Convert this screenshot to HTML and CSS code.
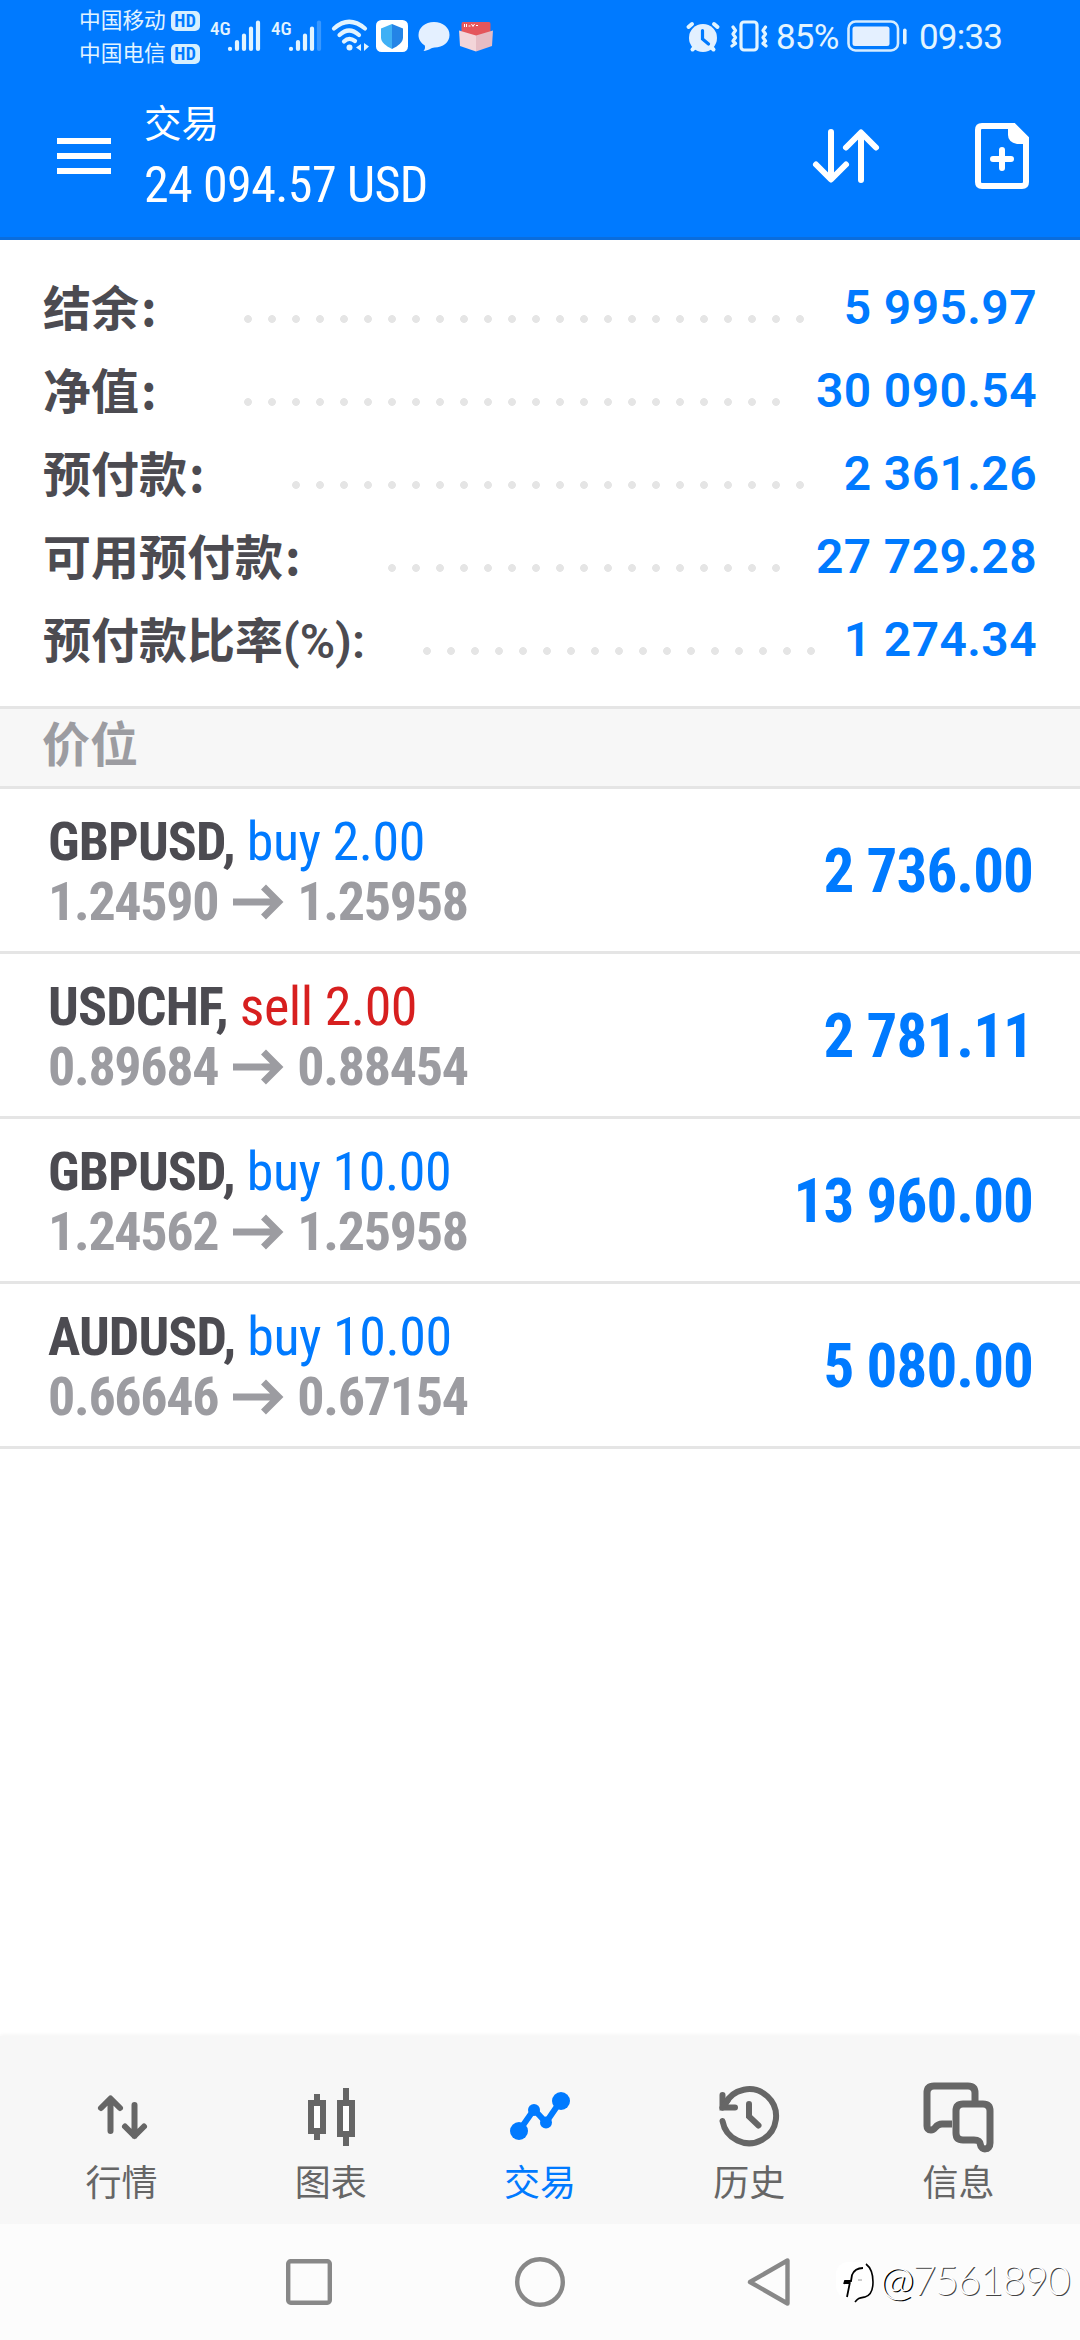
FILE: index.html
```
<!DOCTYPE html>
<html lang="zh-CN">
<head>
<meta charset="utf-8">
<title>交易</title>
<link rel="stylesheet" href="styles.css">
</head>
<body>
<div class="screen">
  <header class="top">
    <div class="status">
      <div class="carriers">
        <div class="carrier"><span>中国移动</span><b class="hd">HD</b></div>
        <div class="carrier"><span>中国电信</span><b class="hd">HD</b></div>
      </div>
      <div class="signal">
        <span class="net">4G</span>
        <svg width="34" height="32" viewBox="0 0 34 32" stroke="#e2f4ff" stroke-width="4.2" stroke-linecap="round"><path d="M3 28.8v.2M10 22v7M17 15.500v13.500M24 8.500v20.500M31 2.500v26.500"/></svg>
      </div>
      <div class="signal signal-2">
        <span class="net">4G</span>
        <svg width="34" height="32" viewBox="0 0 34 32" stroke="#e2f4ff" stroke-width="4.2" stroke-linecap="round"><path d="M3 28.8v.2M10 22v7M17 15.500v13.500M24 8.500v20.500"/><path d="M31 2.500v26.500" opacity=".25"/></svg>
      </div>
      <svg class="wifi" width="40" height="34" viewBox="0 0 40 34" fill="none" stroke="#e2f4ff" stroke-width="4.200" stroke-linecap="round"><path d="M3 9.500Q18 -4 34 9.500M8.500 16Q18 7 28 16M13 22.500Q18 17.500 24 22"/><circle cx="18.500" cy="28.500" r="3" fill="#e2f4ff" stroke="none"/><path d="M30 25v7l-5-3.500zM33 24v8l5-4.500z" fill="#e2f4ff" stroke="none"/></svg>
      <svg class="shield" width="32" height="32" viewBox="0 0 32 32"><rect width="32" height="32" rx="5.500" fill="#fff"/><path d="M16 4l11 4.500v9c0 5-5 8.500-11 11.500z" fill="#2484e6"/><path d="M16 4L5 8.500v9c0 5 5 8.500 11 11.500z" fill="#3fb0f5"/></svg>
      <svg class="chat" width="32" height="31" viewBox="0 0 32 31"><path d="M16 1c9 0 15.500 5.600 15.500 13S25 26.500 16.500 26.500c-3.500 0-5.500 3.200-11 3.500 1.500-1.500 1.800-3.500 1.300-5.500C3 22.200.500 18.500.500 14 .500 6.600 7 1 16 1z" fill="#e4f0ff"/></svg>
      <svg class="gift" width="34" height="31" viewBox="0 0 34 31"><path d="M4 1h26q1.500 0 1.500 2v12H2.500V3Q2.500 1 4 1z" fill="#e4565c"/><path d="M0 9.500L17 14.500V30.500L1 25z" fill="#f3d5d9"/><path d="M34 9.500L17 14.500V30.500L33 25z" fill="#e6bcc4"/><path d="M5.500 3v3M7.500 3v3M9.500 5h2M12.500 3l1.500 2.500L15.500 3M17 4.500h2" stroke="#fff" fill="none"/></svg>
      <svg class="alarm" width="34" height="31" viewBox="0 0 34 31" fill="none" stroke="#e2f4ff" stroke-width="4" stroke-linecap="round"><circle cx="17" cy="17" r="14" fill="#e2f0ff" stroke="none"/><path d="M2.500 6L6 3M31.500 6L28 3M6.500 28.500L9 26M27.500 28.500L25 26"/><path d="M16.500 9.500v8.500l6 5" stroke="#007aff" stroke-width="3.200"/></svg>
      <svg class="vibrate" width="38" height="32" viewBox="0 0 38 32" fill="none" stroke="#e2f4ff" stroke-width="3.200" stroke-linecap="round" stroke-linejoin="round"><rect x="11" y="2" width="16" height="28" rx="3"/><path d="M3 7l2.500 3.500L3 14l2.500 3.500L3 21l2.500 2.500L2 26M35.500 7L33 10.500l2.500 3.500-2.500 3.500 2.500 3.500-2.500 2.500 3 2.500"/></svg>
      <span class="status-text percent">85%</span>
      <svg class="battery" width="60" height="32" viewBox="0 0 60 32"><rect x="1.500" y="1.500" width="49.500" height="29" rx="7" fill="none" stroke="#d5ecff" stroke-width="2.600"/><rect x="5.500" y="6.500" width="37" height="19.500" rx="2.500" fill="#e4f0ff"/><rect x="56" y="8.500" width="3.600" height="16" rx="1.800" fill="#e2f4ff"/></svg>
      <span class="status-text">09:33</span>
    </div>
    <div class="appbar">
      <svg class="menu" width="54" height="36" viewBox="0 0 54 36" fill="#fff"><path d="M0 0h54v6H0zM0 15h54v6H0zM0 30h54v6H0z"/></svg>
      <div class="heading">
        <div class="title">交易</div>
        <div class="total">24 094.57 USD</div>
      </div>
      <svg class="sort" width="66" height="54" viewBox="0 0 66 54" fill="none" stroke="#fff" stroke-width="6" stroke-linecap="round" stroke-linejoin="round"><path d="M18 3v47M3 35.500L18 50.500 33 35.500M48 51V4M33 18.500L48 3.500 63 18.500"/></svg>
      <svg class="new-order" width="54" height="66" viewBox="0 0 54 66" fill="none" stroke="#fff" stroke-width="6"><path d="M7 3H38.500L51 15.500V59q0 4-4 4H7q-4 0-4-4V7q0-4 4-4z"/><path d="M33 4h6l12 12v5h-9q-9-2-9-9z" fill="#fff" stroke="none"/><path d="M27 27v18M18 36h18" stroke-linecap="round"/></svg>
    </div>
  </header>

  <section class="account">
    <div class="line"><span class="label">结余<span class="colon">:</span></span><i class="dots d24"></i><span class="value w224">5 995.97</span></div>
    <div class="line"><span class="label">净值<span class="colon">:</span></span><i class="dots d23"></i><span class="value w248">30 090.54</span></div>
    <div class="line"><span class="label">预付款<span class="colon">:</span></span><i class="dots d22"></i><span class="value w224">2 361.26</span></div>
    <div class="line"><span class="label">可用预付款<span class="colon">:</span></span><i class="dots d17"></i><span class="value w248">27 729.28</span></div>
    <div class="line"><span class="label">预付款比率<span class="paren">(%):</span></span><i class="dots d17"></i><span class="value w213">1 274.34</span></div>
  </section>

  <h2 class="section">价位</h2>

  <main class="positions">
    <article class="position">
      <div>
        <div class="symbol"><b>GBPUSD,</b> <span class="buy">buy 2.00</span></div>
        <div class="prices"><span>1.24590</span><svg width="49" height="34" viewBox="0 0 49 34"><path d="M0 17h45M30.500 2L45.500 17 30.500 32" fill="none" stroke="#9c9ca1" stroke-width="7"/></svg><span>1.25958</span></div>
      </div>
      <div class="profit">2 736.00</div>
    </article>
    <article class="position">
      <div>
        <div class="symbol"><b>USDCHF,</b> <span class="sell">sell 2.00</span></div>
        <div class="prices"><span>0.89684</span><svg width="49" height="34" viewBox="0 0 49 34"><path d="M0 17h45M30.500 2L45.500 17 30.500 32" fill="none" stroke="#9c9ca1" stroke-width="7"/></svg><span>0.88454</span></div>
      </div>
      <div class="profit">2 781.11</div>
    </article>
    <article class="position">
      <div>
        <div class="symbol"><b>GBPUSD,</b> <span class="buy">buy 10.00</span></div>
        <div class="prices"><span>1.24562</span><svg width="49" height="34" viewBox="0 0 49 34"><path d="M0 17h45M30.500 2L45.500 17 30.500 32" fill="none" stroke="#9c9ca1" stroke-width="7"/></svg><span>1.25958</span></div>
      </div>
      <div class="profit">13 960.00</div>
    </article>
    <article class="position">
      <div>
        <div class="symbol"><b>AUDUSD,</b> <span class="buy">buy 10.00</span></div>
        <div class="prices"><span>0.66646</span><svg width="49" height="34" viewBox="0 0 49 34"><path d="M0 17h45M30.500 2L45.500 17 30.500 32" fill="none" stroke="#9c9ca1" stroke-width="7"/></svg><span>0.67154</span></div>
      </div>
      <div class="profit">5 080.00</div>
    </article>
  </main>

  <nav class="tabs">
    <a class="tab">
      <svg width="72" height="72" viewBox="0 0 72 72" fill="none" stroke="#666" stroke-width="6" stroke-linecap="round" stroke-linejoin="round"><path d="M24.500 48V16M15 25l9.500-9.500L34 25M48.500 22v31M39 43.500l9.500 9.500 9.500-9.500"/></svg>
      <span>行情</span>
    </a>
    <a class="tab">
      <svg width="72" height="72" viewBox="0 0 72 72"><path d="M19 11h6v46h-6zM48 5h6v58h-6z" fill="#666"/><path d="M16 20h12v28H16zM45 20h12v31H45z" fill="#fff" stroke="#666" stroke-width="6"/></svg>
      <span>图表</span>
    </a>
    <a class="tab active">
      <svg width="72" height="72" viewBox="0 0 72 72" fill="#007aff"><path d="M15 48L30 26.500 42 39.500 57 17.500" fill="none" stroke="#007aff" stroke-width="6"/><circle cx="15" cy="48" r="9"/><circle cx="30" cy="27" r="6"/><circle cx="42" cy="39.500" r="6"/><circle cx="57" cy="18" r="9"/></svg>
      <span>交易</span>
    </a>
    <a class="tab">
      <svg width="72" height="72" viewBox="0 0 72 72" fill="none" stroke="#666" stroke-width="6" stroke-linecap="round"><path d="M9.500 38A27 27 0 1 0 11.500 22"/><path d="M9.500 12v12.500H22" stroke-linejoin="miter"/><path d="M9.500 24.500L15 17" /><path d="M36 21v12.500l9.500 9"/></svg>
      <span>历史</span>
    </a>
    <a class="tab">
      <svg width="76" height="72" viewBox="0 0 76 72" fill="none" stroke="#666" stroke-width="7" stroke-linejoin="round"><path d="M32 41H22c-7 0-6 6-11 6-3 0-4-2-4-4V10q0-7 7-7H48q7 0 7 7v11"/><path d="M43 21H63q7 0 7 7V60c0 8-9 7-9.500 2-.5-4-2.500-5-6.500-5H43q-7 0-7-7V28q0-7 7-7z"/></svg>
      <span>信息</span>
    </a>
  </nav>

  <footer class="system">
    <svg class="recent" width="46" height="46" viewBox="0 0 46 46"><rect x="2.200" y="2.200" width="41.600" height="41.600" rx="2.500" fill="none" stroke="#888" stroke-width="4.400"/></svg>
    <svg class="home" width="50" height="50" viewBox="0 0 50 50"><circle cx="25" cy="25" r="22.800" fill="none" stroke="#888" stroke-width="4.400"/></svg>
    <svg class="back" width="43" height="50" viewBox="0 0 43 50"><path d="M40.500 3.500v43L3 25z" fill="none" stroke="#888" stroke-width="4.400" stroke-linejoin="round"/></svg>
    <div class="watermark">
      <svg width="44" height="48" viewBox="0 0 44 48"><rect x="0" y="4" width="36" height="36" rx="12" fill="#fff"/><path d="M30 6c9 7 10 30-1 33-6 1-7 1-10 5" fill="none" stroke="#000" stroke-width="1.600"/><path d="M8 26l1-3h6l1-6c2-5 5-7 11-7M14 24l-3 15M8 25h6" fill="none" stroke="#000" stroke-width="1.800"/><path d="M22 22h4" stroke="#999"/></svg>
      <span class="account-id"><span class="at">@</span>7561890</span>
    </div>
  </footer>
</div>
</body>
</html>
```
FILE: styles.css
```
* { box-sizing: border-box; }
body { margin: 0; background: #fff; font-family: Roboto, "Noto Sans CJK SC", sans-serif; }
svg { display: block; flex: none; overflow: visible; }
.screen { width: 1080px; height: 2340px; display: flex; flex-direction: column; overflow: hidden; }

.top { height: 240px; flex: none; background: #007aff; border-bottom: 3px solid #0a6ddd; color: #fff; }
.status { height: 72px; padding: 0 0 0 79px; display: flex; align-items: center; color: #e2f4ff; }
.carriers { width: 121px; height: 72px; display: grid; grid-template-rows: 33px 33px; padding-top: 4px; }
.carrier { display: flex; align-items: center; gap: 5px; font-size: 21.7px; line-height: 33px; white-space: nowrap; }
.hd { width: 29px; height: 20px; border-radius: 5px; background: #d5efff; color: #007aff; font: 700 18px/20px "Roboto Condensed", sans-serif; text-align: center; letter-spacing: .5px; }
.signal { display: flex; margin-left: 10px; width: 51px; }
.signal-2 { margin-left: 10px; }
.net { width: 17px; font: 500 19px/19px "Roboto Condensed", sans-serif; margin-top: -1px; white-space: nowrap; }
.wifi { margin-left: 9px; }
.shield { margin-left: 5px; }
.chat { margin-left: 10px; }
.gift { margin-left: 9px; }
.alarm { margin-left: 193px; }
.vibrate { margin-left: 10px; }
.status-text { font-size: 35px; line-height: 72px; padding-top: 4px; letter-spacing: -.8px; white-space: nowrap; }
.percent { margin-left: 8px; width: 71px; }
.battery { margin-right: 12px; }

.appbar { height: 165px; display: flex; align-items: flex-start; padding-left: 57px; }
.menu { margin-top: 66px; }
.heading { width: 702px; padding: 27px 0 0 33px; }
.title { font-size: 37.5px; line-height: 50px; }
.total { font: 400 50px/56px "Roboto Condensed", sans-serif; margin-top: 8px; letter-spacing: -.6px; }
.sort { margin: 57px 0 0 0; }
.new-order { margin: 51px 0 0 96px; }

.account { height: 466px; flex: none; padding: 27px 43px 0 43px; }
.line { height: 83px; display: flex; align-items: center; }
.label { flex: 1; font-size: 48px; line-height: 77px; padding-bottom: 6px; font-weight: 700; color: #4c4b51; font-family: "Noto Sans CJK SC", sans-serif; white-space: nowrap; }
.colon { margin-left: 2px; }
.paren { font-family: Roboto, sans-serif; font-weight: 600; line-height: 1; }
.dots { height: 8px; margin-top: 21px; background: radial-gradient(circle at 12px 4px, #e5e5e5 3.500px, transparent 4.300px) 0 0 / 24px 8px repeat-x; }
.d24 { width: 576px; } .d23 { width: 552px; } .d22 { width: 528px; } .d17 { width: 408px; }
.value { font-size: 48px; line-height: 81px; padding-bottom: 2px; font-weight: 600; color: #007aff; text-align: right; letter-spacing: .4px; white-space: nowrap; }
.w224 { width: 225px; } .w248 { width: 249px; } .w213 { width: 214px; }

.section { margin: 0; height: 83px; flex: none; border: solid #e5e5e5; border-width: 3px 0; background: #f7f7f7; padding-left: 42px; font: 700 48px/65px "Noto Sans CJK SC", sans-serif; color: #9c9ca1; }

.position { height: 165px; border-bottom: 3px solid #e5e5e5; display: flex; justify-content: space-between; padding: 23px 47px 0 48px; }
.symbol { font: 400 54px/60px "Roboto Condensed", sans-serif; white-space: nowrap; color: #4c4b51; letter-spacing: -.45px; }
.symbol b { font-weight: 700; letter-spacing: -.9px; }
.buy { color: #007aff; }
.sell { color: #d71f1f; }
.prices { display: flex; align-items: center; font: 700 54px/60px "Roboto Condensed", sans-serif; color: #9c9ca1; letter-spacing: -1.3px; }
.prices svg { margin: 0 15px 0 15px; }
.profit { font: 700 61px/118px "Roboto Condensed", sans-serif; color: #007aff; white-space: nowrap; letter-spacing: -.9px; }

.tabs { margin-top: auto; height: 188px; flex: none; background: #f7f7f7; box-shadow: 0 -1px 4px rgba(0,0,0,.05); display: flex; padding: 47px 17px 0; }
.tab { flex: 1; display: flex; flex-direction: column; align-items: center; color: #666; font-size: 36px; line-height: 50px; }
.tab span { margin-top: 4px; }
.active { color: #007aff; }

.system { height: 116px; flex: none; background: #fcfcfc; display: flex; align-items: center; padding-left: 286px; }
.home { margin-left: 183px; }
.back { margin-left: 182px; }
.watermark { display: flex; align-items: center; margin-left: 46px; }
.account-id { font: 300 41px/46px Lato, sans-serif; color: #fff; text-shadow: 1px 1px 0 #444; letter-spacing: -1.4px; padding-bottom: 4px; }
.at { text-shadow: 1.500px 1px 0 #000; }
```
